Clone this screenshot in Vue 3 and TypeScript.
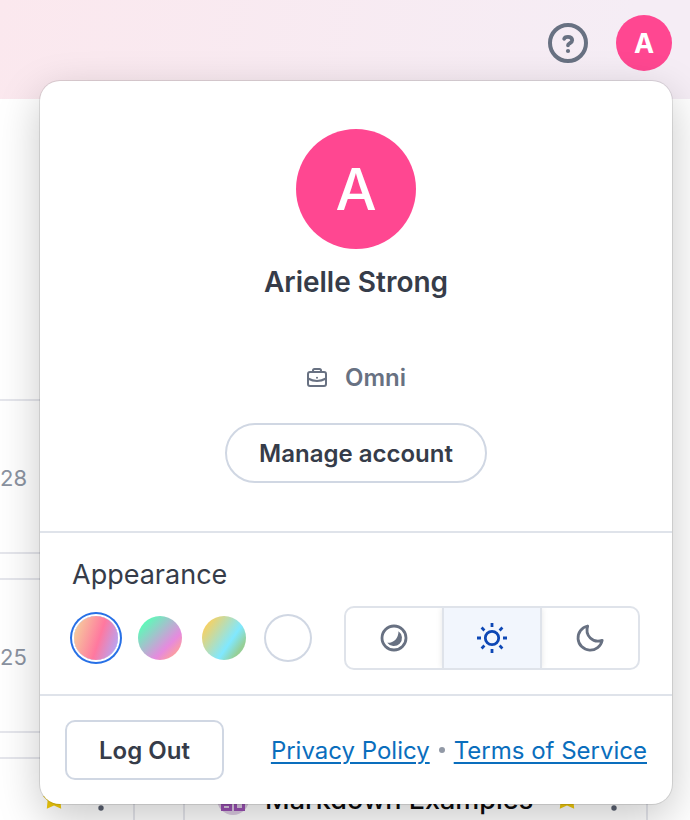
<script setup lang="ts">
import { ref } from 'vue'

interface Theme {
  id: string
  label: string
}

const themes: Theme[] = [
  { id: 'sunset', label: 'Sunset' },
  { id: 'aurora', label: 'Aurora' },
  { id: 'lagoon', label: 'Lagoon' },
  { id: 'plain', label: 'Plain' },
]
const modes: Theme[] = [
  { id: 'auto', label: 'Automatic' },
  { id: 'light', label: 'Light' },
  { id: 'dark', label: 'Dark' },
]
const theme = ref('sunset')
const mode = ref('light')
const dates = ['28', '25']
</script>

<template>
  <div class="page">
    <header class="topbar">
      <button class="help" type="button" aria-label="Help">
        <svg viewBox="0 0 40 40" width="40" height="40" fill="none" stroke="currentColor" stroke-width="4">
          <circle cx="20" cy="20" r="18" />
          <path d="M16.200 15.800c.3-1.200 1.800-2 3.800-2 2.600 0 4.200 1.500 4.200 3.500 0 3-4.200 2.800-4.200 5" stroke-linecap="round" stroke-linejoin="round" stroke-width="3.800" />
          <circle cx="20" cy="28" r="2.100" fill="currentColor" stroke="none" />
        </svg>
      </button>
      <button class="avatar small" type="button" aria-label="Account">A</button>
    </header>

    <main class="board">
      <div class="column">
        <article v-for="d in dates" :key="d" class="card dated"><span>{{ d }}</span></article>
        <article class="card entry">
          <svg class="star" viewBox="0 0 24 24" width="24" height="24"><path d="M12 1l3.300 7.200 7.700.9-4.600 4.700.8 7.900L12 18.400 4.800 21.700l.8-7.900L1 9.100l7.700-.9z" /></svg>
          <svg class="more" viewBox="0 0 6 24" width="6" height="24"><circle cx="3" cy="3" r="2.700" /><circle cx="3" cy="12" r="2.700" /><circle cx="3" cy="21" r="2.700" /></svg>
        </article>
      </div>
      <div class="column wide">
        <article class="card entry">
          <span class="badge">
            <svg viewBox="0 0 24 24" width="24" height="24" fill="none" stroke="currentColor" stroke-width="3"><path d="M1.500 1.500h8v6h-8zM14.500 1.500h8v9h-8zM1.500 12.500h8v10h-8zM14.500 15.500h8v7h-8zM3 17.500h6" /></svg>
          </span>
          <span class="title">Markdown Examples</span>
          <svg class="star" viewBox="0 0 24 24" width="24" height="24"><path d="M12 1l3.300 7.200 7.700.9-4.600 4.700.8 7.900L12 18.400 4.800 21.700l.8-7.900L1 9.100l7.700-.9z" /></svg>
          <svg class="more" viewBox="0 0 6 24" width="6" height="24"><circle cx="3" cy="3" r="2.700" /><circle cx="3" cy="12" r="2.700" /><circle cx="3" cy="21" r="2.700" /></svg>
        </article>
      </div>
    </main>

    <section class="popover" aria-label="Account menu">
      <div class="profile">
        <div class="avatar large">A</div>
        <h1>Arielle Strong</h1>
        <p class="org">
          <svg viewBox="0 0 22 22" width="22" height="22" fill="none" stroke="currentColor" stroke-width="2">
            <rect x="2" y="5" width="18" height="14" rx="2" />
            <path d="M7 5V3.500A1.500 1.500 0 0 1 8.500 2h5A1.500 1.500 0 0 1 15 3.500V5M2 11.500c5.500 3 12.500 3 18 0" />
            <circle cx="11" cy="10.800" r="1" fill="currentColor" stroke="none" />
          </svg>
          <span>Omni</span>
        </p>
        <button class="manage" type="button">Manage account</button>
      </div>

      <div class="appearance">
        <h2>Appearance</h2>
        <div class="options">
          <div class="swatches" role="radiogroup" aria-label="Theme">
            <input
              v-for="t in themes"
              :key="t.id"
              v-model="theme"
              type="radio"
              name="theme"
              :value="t.id"
              :aria-label="t.label"
              :class="['swatch', t.id]"
            />
          </div>
          <div class="modes" role="group" aria-label="Colour mode">
            <button
              v-for="m in modes"
              :key="m.id"
              type="button"
              :class="['mode', { active: mode === m.id }]"
              :aria-label="m.label"
              :aria-pressed="mode === m.id"
              @click="mode = m.id"
            >
              <svg v-if="m.id === 'auto'" viewBox="0 0 32 32" width="32" height="32">
                <circle cx="16" cy="16" r="12" fill="none" stroke="currentColor" stroke-width="2.800" />
                <path d="M20.500 9.200a8.200 8.200 0 1 1-11.300 11.600c6.500.3 11.300-4.300 11.300-11.600z" fill="currentColor" />
              </svg>
              <svg v-else-if="m.id === 'light'" viewBox="0 0 32 32" width="32" height="32" fill="none" stroke="currentColor" stroke-width="2.800">
                <circle cx="16" cy="16" r="6.700" />
                <path d="M16 1v4M16 27v4M1 16h4M27 16h4M5.600 5.600l2.800 2.800M23.600 23.600l2.800 2.800M5.600 26.400l2.800-2.800M23.600 8.400l2.800-2.800" />
              </svg>
              <svg v-else viewBox="0 0 32 32" width="32" height="32" fill="none" stroke="currentColor" stroke-width="2.800" stroke-linejoin="round">
                <path d="M13.700 4A12.200 12.200 0 1 0 28.200 18.300C19 21.500 10.500 13.500 13.700 4z" />
              </svg>
            </button>
          </div>
        </div>
      </div>

      <footer class="foot">
        <button class="logout" type="button">Log Out</button>
        <nav class="links">
          <a href="#privacy">Privacy Policy</a>
          <span class="dot"></span>
          <a href="#terms">Terms of Service</a>
        </nav>
      </footer>
    </section>
  </div>
</template>

<style>
body {
  margin: 0;
  background: #fff;
}
</style>

<style scoped>
* {
  box-sizing: border-box;
}
.page {
  position: relative;
  height: 100vh;
  overflow: hidden;
  background: #fff;
  color: #363c49;
  font-family: Inter, "Liberation Sans", sans-serif;
  font-size: 24px;
}
button {
  padding: 0;
  border: 0;
  background: none;
  color: inherit;
  font: inherit;
  cursor: pointer;
}
svg {
  display: block;
  flex: none;
}
h1,
h2,
p {
  margin: 0;
}
.topbar {
  display: flex;
  justify-content: flex-end;
  align-items: center;
  gap: 28px;
  height: 99px;
  padding: 0 18px 13px;
  background: linear-gradient(100deg, #fbe8ee, #f5edf5 90%);
}
.help {
  color: #687182;
}
.avatar {
  display: flex;
  align-items: center;
  justify-content: center;
  border-radius: 50%;
  background: #ff4791;
  color: #fff;
}
.avatar.small {
  width: 56px;
  height: 56px;
  font-size: 27px;
  font-weight: 700;
}
.avatar.large {
  width: 120px;
  height: 120px;
  font-size: 58px;
  font-weight: 500;
}
.board {
  display: grid;
  grid-template-columns: 135px 1fr;
  gap: 48px;
  padding: 300px 42px 0 0;
}
.column {
  display: flex;
  flex-direction: column;
  gap: 24px;
}
.column.wide {
  padding-top: 358px;
}
.card {
  display: flex;
  align-items: center;
  height: 155px;
  border: 2px solid #e5e6ec;
}
.column:not(.wide) .card {
  border-left: 0;
}
.dated {
  padding-top: 2px;
  color: #8b93a1;
  font-size: 22px;
}
.entry {
  align-items: flex-start;
  padding: 28px 29px 0 32px;
}
.column:not(.wide) .entry {
  padding-left: 42px;
}
.star {
  fill: #f2cb0c;
}
.more {
  margin-left: auto;
  fill: #596070;
}
.wide .more {
  margin-left: 32px;
}
.badge {
  display: flex;
  align-items: center;
  justify-content: center;
  width: 32px;
  height: 32px;
  margin: -4px 16px 0 0;
  border-radius: 50%;
  background: #dccbe2;
  color: #9b51b4;
}
.title {
  margin: -3px auto 0 0;
  color: #0c0c0e;
  font-size: 27px;
  font-weight: 500;
  line-height: 32px;
  white-space: nowrap;
}
.popover {
  position: absolute;
  top: 81px;
  right: 18px;
  left: 40px;
  border-radius: 20px;
  background: #fff;
  box-shadow: 0 0 0 1px rgba(0, 0, 0, 0.1), 0 14px 44px rgba(0, 0, 0, 0.22);
}
.profile {
  display: flex;
  flex-direction: column;
  align-items: center;
  padding: 48px 32px;
  border-bottom: 2px solid #dfe3ea;
}
h1 {
  margin-top: 16px;
  font-size: 28px;
  font-weight: 600;
  line-height: 34px;
}
.org {
  display: flex;
  align-items: center;
  gap: 17px;
  margin-top: 63px;
  color: #687182;
  font-weight: 600;
  line-height: 32px;
}
.manage,
.logout {
  height: 60px;
  padding: 0 32px;
  border: 2px solid #d0d7e3;
  font-weight: 600;
}
.manage {
  margin-top: 29px;
  border-radius: 30px;
}
.logout {
  border-radius: 10px;
}
.appearance {
  padding: 24px 32px;
  border-bottom: 2px solid #dfe3ea;
}
h2 {
  margin-bottom: 13px;
  font-size: 27px;
  font-weight: 400;
  line-height: 36px;
}
.options {
  display: flex;
  align-items: center;
  gap: 34px;
}
.swatches {
  display: flex;
  gap: 20px;
  padding-left: 2px;
}
.swatch {
  appearance: none;
  width: 44px;
  height: 44px;
  margin: 0;
  border-radius: 50%;
  cursor: pointer;
}
.swatch.sunset {
  background: linear-gradient(108deg, #f5d19c 5%, #ff789f 56%, #b5a5f5 92%);
}
.swatch.aurora {
  background: linear-gradient(135deg, #58ffb7 12%, #e68ade 68%, #ffa198 88%);
}
.swatch.lagoon {
  background: linear-gradient(125deg, #fad05e 12%, #80e8ff 62%, #96cf96 82%);
}
.swatch.plain {
  background: #fff;
  box-shadow: 0 0 0 2px #d0d7e3;
}
.swatch:checked {
  box-shadow: 0 0 0 2px #fff, 0 0 0 4px #2770e6;
}
.modes {
  display: flex;
  flex: 1;
  height: 64px;
  overflow: hidden;
  border: 2px solid #dfe3ea;
  border-radius: 10px;
}
.mode {
  display: flex;
  flex: 1;
  align-items: center;
  justify-content: center;
  color: #687182;
}
.mode.active {
  border: solid #dfe3ea;
  border-width: 0 2px;
  background: #f2f6fd;
  box-shadow: 0 0 6px rgba(0, 0, 0, 0.1);
  color: #0d47b5;
}
.foot {
  display: flex;
  align-items: center;
  justify-content: space-between;
  padding: 24px 25px;
}
.links {
  display: flex;
  align-items: center;
  gap: 9px;
}
.links a {
  color: #0a6ebd;
  text-decoration: underline;
  text-decoration-thickness: 2px;
  text-underline-offset: 3px;
  white-space: nowrap;
}
.dot {
  width: 6px;
  height: 6px;
  border-radius: 50%;
  background: #9299a6;
}
</style>
